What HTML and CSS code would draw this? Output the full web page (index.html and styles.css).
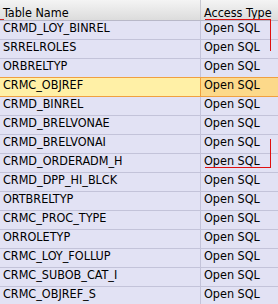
FILE: index.html
```html
<!DOCTYPE html>
<html>
<head>
<meta charset="utf-8">
<link rel="stylesheet" href="styles.css">
</head>
<body>
<div class="grid">
  <div class="row head">
    <div class="c1">Table Name<span class="mark"></span></div>
    <div class="c2">Access Type</div>
  </div>
  <div class="row"><div class="c1">CRMD_LOY_BINREL</div><div class="c2">Open SQL</div></div>
  <div class="row"><div class="c1">SRRELROLES</div><div class="c2">Open SQL</div></div>
  <div class="row"><div class="c1">ORBRELTYP</div><div class="c2">Open SQL</div></div>
  <div class="row sel"><div class="c1">CRMC_OBJREF</div><div class="c2">Open SQL</div></div>
  <div class="row"><div class="c1">CRMD_BINREL</div><div class="c2">Open SQL</div></div>
  <div class="row"><div class="c1">CRMD_BRELVONAE</div><div class="c2">Open SQL</div></div>
  <div class="row"><div class="c1">CRMD_BRELVONAI</div><div class="c2">Open SQL</div></div>
  <div class="row"><div class="c1">CRMD_ORDERADM_H</div><div class="c2">Open SQL</div></div>
  <div class="row"><div class="c1">CRMD_DPP_HI_BLCK</div><div class="c2">Open SQL</div></div>
  <div class="row"><div class="c1">ORTBRELTYP</div><div class="c2">Open SQL</div></div>
  <div class="row"><div class="c1">CRMC_PROC_TYPE</div><div class="c2">Open SQL</div></div>
  <div class="row"><div class="c1">ORROLETYP</div><div class="c2">Open SQL</div></div>
  <div class="row"><div class="c1">CRMC_LOY_FOLLUP</div><div class="c2">Open SQL</div></div>
  <div class="row"><div class="c1">CRMC_SUBOB_CAT_I</div><div class="c2">Open SQL</div></div>
  <div class="row"><div class="c1">CRMC_OBJREF_S</div><div class="c2">Open SQL</div></div>
</div>
<div class="anno anno-top"></div>
<div class="anno anno-mid"></div>
</body>
</html>
```
FILE: styles.css
```css
html, body {
  margin: 0;
  padding: 0;
  width: 278px;
  height: 304px;
  overflow: hidden;
  background: #e2e2f4;
}
.grid {
  font-family: "DejaVu Sans Condensed", "DejaVu Sans", sans-serif;
  font-stretch: condensed;
  font-size: 12.5px;
  color: #000;
}
.row {
  display: flex;
  height: 18px;
  border-bottom: 1px solid #c3c3d9;
  background: #e2e2f4;
}
.row > div {
  line-height: 14px;
  padding-left: 3px;
  box-sizing: border-box;
  white-space: nowrap;
}
.c1 {
  width: 201px;
  border-right: 1px solid #c3c3d9;
  position: relative;
}
.c2 {
  flex: 1;
}
.head {
  height: 20px;
  background: linear-gradient(#f4f4f4, #dcdcdc);
  border-bottom: 1px solid #b8b8c8;
}
.head > div {
  padding-top: 6px;
}
.head .c1 {
  border-right: 1px solid #c8c8d0;
}
.mark {
  position: absolute;
  left: 0;
  bottom: 0;
  width: 4px;
  height: 1px;
  background: #d02020;
}
.sel {
  border-top: 1px solid #f0a040;
  border-bottom: 1px solid #f0a040;
  height: 18px;
  margin-top: -1px;
}
.sel .c1 {
  background: #fff0a6;
  border-right: 1px solid #f0a040;
}
.sel .c2 {
  background: #fcd98a;
}
.anno {
  position: absolute;
  border-color: #e01010;
  border-style: solid;
  border-width: 0;
}
.anno-top {
  left: 205px;
  top: 19px;
  width: 65px;
  height: 31px;
  border-top-width: 1px;
  border-right-width: 1px;
}
.anno-mid {
  left: 205px;
  top: 139px;
  width: 65px;
  height: 28px;
  border-bottom-width: 1px;
  border-right-width: 1px;
}
```
